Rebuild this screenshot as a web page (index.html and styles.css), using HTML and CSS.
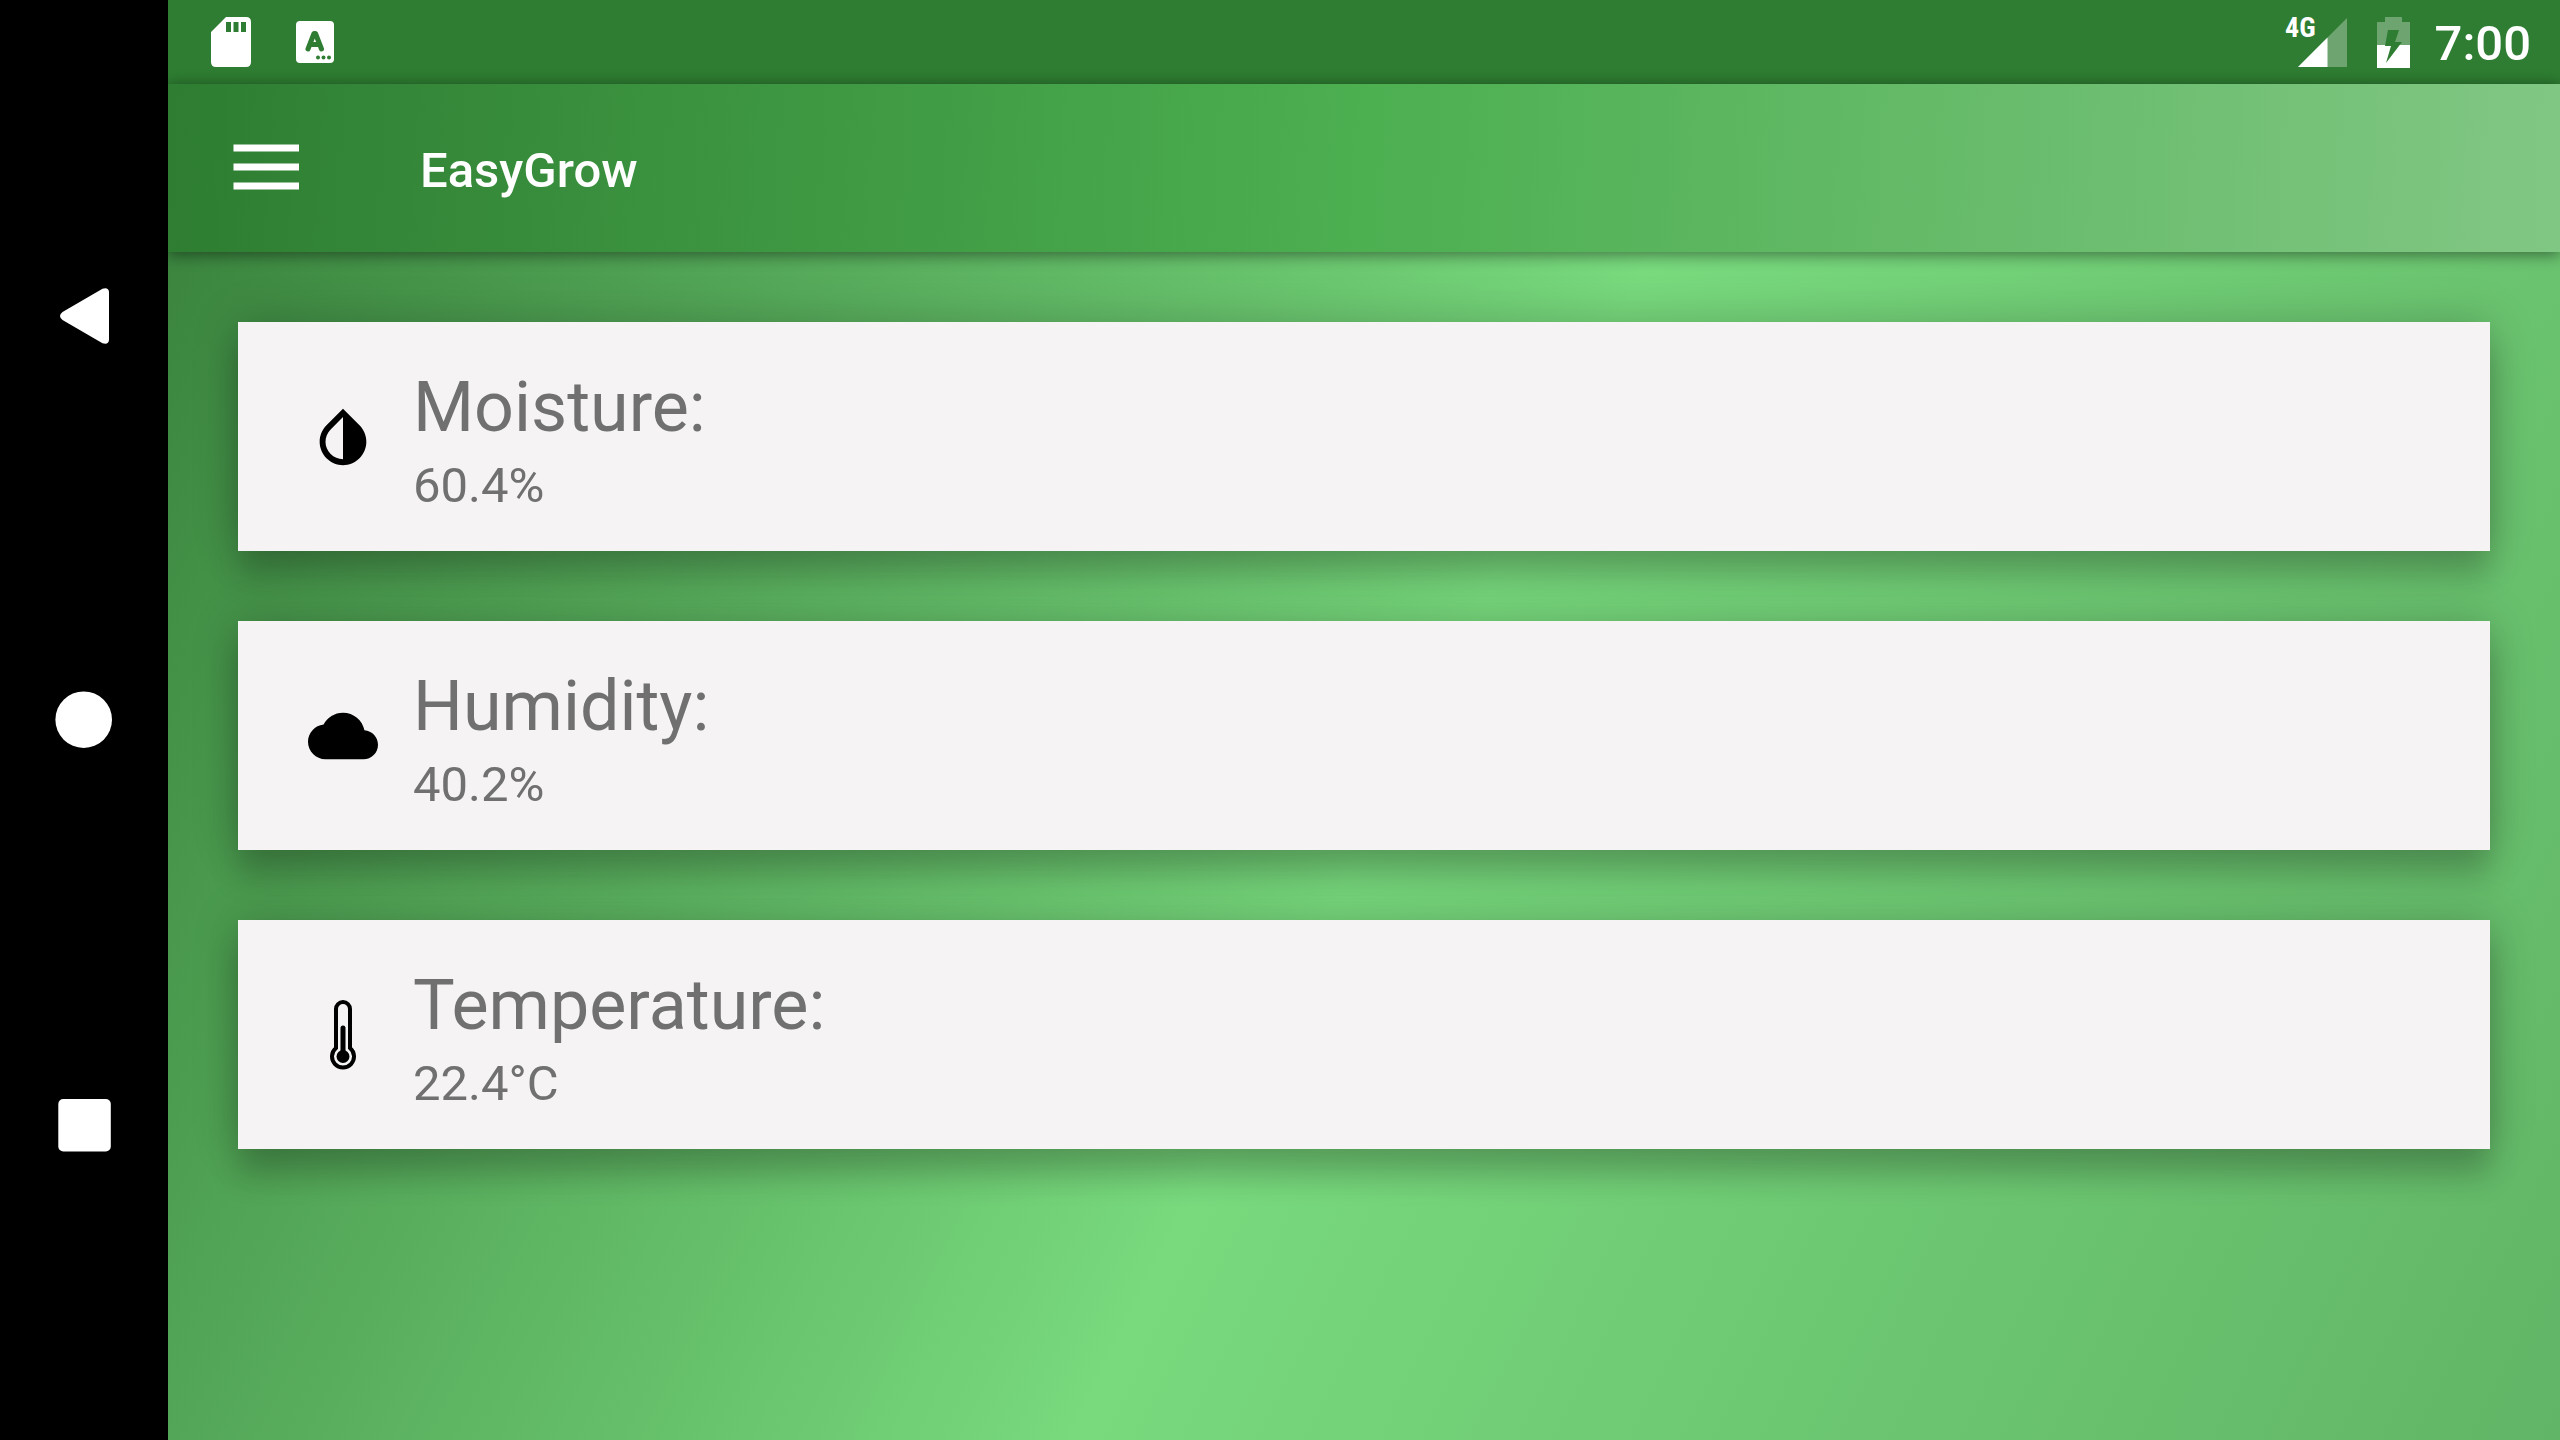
FILE: index.html
```
<!DOCTYPE html>
<html lang="en">
<head>
<meta charset="utf-8">
<title>EasyGrow</title>
<link rel="stylesheet" href="styles.css">
</head>
<body>
<nav class="system-nav" aria-label="System">
  <button class="nav-button" aria-label="Back">
    <svg class="nav-icon" viewBox="0 0 60 60"><path d="M48.500 2.800Q54.500 1 55 6V54Q54.500 59 48.500 57.200L8.500 34Q3.500 30 8.500 26Z"/></svg>
  </button>
  <button class="nav-button" aria-label="Home">
    <svg class="nav-icon" viewBox="0 0 60 60"><circle cx="29.700" cy="29.700" r="28.300"/></svg>
  </button>
  <button class="nav-button" aria-label="Recent apps">
    <svg class="nav-icon" viewBox="0 0 60 60"><rect x="4.300" y="5" width="52.500" height="52.500" rx="5"/></svg>
  </button>
</nav>
<div class="screen">
  <div class="status-bar">
    <div class="status-group">
      <svg class="sd-icon" viewBox="0 0 40 50"><path fill-rule="evenodd" d="M15 0H35Q40 0 40 5V45Q40 50 35 50H5Q0 50 0 45V15ZM15 5V15H20V5ZM22.500 5V15H27.500V5ZM30 5V15H35V5Z"/></svg>
      <svg class="app-icon" viewBox="0 0 38 42"><rect width="38" height="42" rx="4"/><path class="app-mark" d="M12 28 18 12.500H19.500L25.500 28M14 23.500H23.500"/><g class="app-dots"><circle cx="22" cy="36.500" r="2"/><circle cx="27.500" cy="36.500" r="2"/><circle cx="33" cy="36.500" r="2"/></g></svg>
    </div>
    <div class="status-group status-end">
      <span class="network">4G</span>
      <svg class="signal-icon" viewBox="0 0 49 49"><path opacity=".3" d="M49 0V49H0Z"/><path d="M29.500 19.500V49H0Z"/></svg>
      <svg class="battery-icon" viewBox="0 0 33 51"><path opacity=".3" d="M8 0H25V5H33V28H0V5H8Z"/><path d="M0 28H33V51H0Z"/><path class="bolt" d="M11 13H22L18 25H25L9 46L14 29H8Z"/></svg>
      <time class="clock">7:00</time>
    </div>
  </div>
  <header class="app-bar">
    <button class="menu-button" aria-label="Open menu">
      <svg class="menu-icon" viewBox="0 0 68 48"><path d="M1.500 .5H67V7.500H1.500ZM1.500 19.500H67V26.500H1.500ZM1.500 38.500H67V45.500H1.500Z"/></svg>
    </button>
    <h1 class="title">EasyGrow</h1>
  </header>
  <main class="readings">
    <section class="card">
      <svg class="card-icon" viewBox="0 0 24 24"><path d="M17.660 8 12 2.350 6.340 8C4.780 9.560 4 11.640 4 13.640s.78 4.110 2.340 5.670 3.610 2.350 5.660 2.350 4.100-.79 5.660-2.350S20 15.640 20 13.640 19.220 9.560 17.660 8zM12 19.590c-1.600 0-3.110-.62-4.240-1.760C6.620 16.690 6 15.230 6 13.640c0-1.600.62-3.110 1.760-4.240L12 5.100z"/></svg>
      <div class="card-text">
        <h2 class="label">Moisture:</h2>
        <p class="value">60.4%</p>
      </div>
    </section>
    <section class="card">
      <svg class="card-icon" viewBox="0 0 24 24"><path d="M19.350 10.040C18.670 6.590 15.640 4 12 4 9.110 4 6.600 5.640 5.350 8.040 2.340 8.360 0 10.910 0 14c0 3.310 2.690 6 6 6h13c2.760 0 5-2.240 5-5 0-2.640-2.050-4.780-4.650-4.960z"/></svg>
      <div class="card-text">
        <h2 class="label">Humidity:</h2>
        <p class="value">40.2%</p>
      </div>
    </section>
    <section class="card">
      <svg class="card-icon" viewBox="0 0 70 70"><path class="glass" d="M28 48V9A7 7 0 0 1 42 9V48A11 11 0 1 1 28 48Z"/><path class="mercury" d="M35 28V56"/><circle cx="35" cy="56.500" r="6.500"/></svg>
      <div class="card-text">
        <h2 class="label">Temperature:</h2>
        <p class="value">22.4°C</p>
      </div>
    </section>
  </main>
</div>
</body>
</html>
```
FILE: styles.css
```
* {
  box-sizing: border-box;
}

body {
  margin: 0;
  min-height: 100vh;
  display: flex;
  background: #000;
  font-family: Roboto, "Noto Sans", sans-serif;
}

button {
  border: 0;
  padding: 0;
  background: none;
  cursor: pointer;
}

svg {
  display: block;
  flex: none;
}

h1, h2, p {
  margin: 0;
}

/* System navigation */
.system-nav {
  flex: none;
  width: 168px;
  padding: 192px 0;
  display: flex;
  flex-direction: column;
  justify-content: space-between;
}

.nav-button {
  height: 248px;
  display: flex;
  align-items: center;
  justify-content: center;
}

.nav-icon {
  width: 60px;
  height: 60px;
  fill: #fff;
}

.screen {
  flex: 1;
  min-width: 0;
  display: flex;
  flex-direction: column;
  overflow: hidden;
}

/* Status bar */
.status-bar {
  height: 84px;
  padding: 0 29px 0 43px;
  display: flex;
  align-items: center;
  justify-content: space-between;
  background: #2e7d32;
  color: #fff;
}

.status-group {
  display: flex;
  align-items: center;
  gap: 45px;
}

.status-group svg {
  fill: #fff;
}

.sd-icon {
  width: 40px;
  height: 50px;
}

.app-icon {
  width: 38px;
  height: 42px;
}

.app-icon .app-mark {
  fill: none;
  stroke: #2e7d32;
  stroke-width: 5;
  stroke-linecap: round;
  stroke-linejoin: round;
}

.app-icon .app-dots,
.battery-icon .bolt {
  fill: #2e7d32;
}

.status-end {
  gap: 0;
}

.network {
  align-self: flex-start;
  padding-top: 4px;
  font: 700 28px/28px "Roboto Condensed", Roboto, sans-serif;
}

.signal-icon {
  width: 49px;
  height: 49px;
  margin-left: -18px;
}

.battery-icon {
  width: 33px;
  height: 51px;
  margin: 0 25px 0 30px;
}

.clock {
  padding-top: 4px;
  font-size: 49px;
  line-height: 60px;
  font-weight: 500;
}

/* App bar */
.app-bar {
  position: relative;
  height: 168px;
  padding-left: 64px;
  display: flex;
  align-items: center;
  gap: 120px;
  background: linear-gradient(94deg, #2e7d32, #4caf50 50%, #81c784);
  box-shadow: 0 4px 14px rgba(0, 0, 0, 0.3), 0 0 14px rgba(0, 0, 0, 0.2);
}

.menu-icon {
  width: 68px;
  height: 48px;
  fill: #fff;
}

.title {
  padding-top: 5px;
  color: #fff;
  font-size: 49px;
  line-height: 60px;
  font-weight: 500;
}

/* Sensor readings */
.readings {
  flex: 1;
  padding: 70px;
  display: flex;
  flex-direction: column;
  gap: 70px;
  background: linear-gradient(116deg, #3b853f, #78d97d 50%, #61b566);
}

.card {
  padding: 0 70px;
  display: flex;
  align-items: center;
  gap: 35px;
  background: #f5f3f4;
  box-shadow: 0 28px 28px rgba(0, 0, 0, 0.17), 0 0 42px rgba(0, 0, 0, 0.22);
}

.card-icon {
  width: 70px;
  height: 70px;
}

.card-icon .glass {
  fill: none;
  stroke: #000;
  stroke-width: 4;
}

.card-icon .mercury {
  stroke: #000;
  stroke-width: 5;
  stroke-linecap: round;
}

.card-text {
  padding: 43px 0 35px;
  display: grid;
  gap: 6px;
  color: #707070;
}

.label {
  font-size: 70px;
  line-height: 85px;
  font-weight: 400;
}

.value {
  font-size: 49px;
  line-height: 60px;
}
```
